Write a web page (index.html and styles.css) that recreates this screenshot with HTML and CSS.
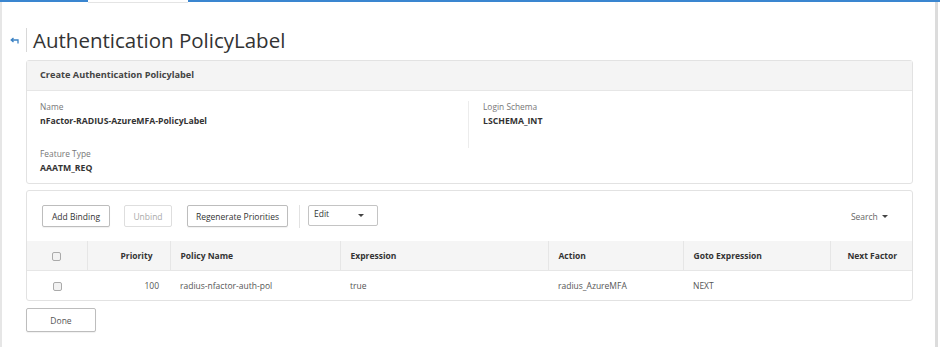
FILE: index.html
```html
<!DOCTYPE html>
<html lang="en">
<head>
    <meta charset="UTF-8">
    <title>Authentication PolicyLabel</title>
    <link rel="stylesheet" href="styles.css">
</head>
<body>
    <div class="topbar">
        <div class="topbar-line"></div>
        <div class="topbar-tab"></div>
        <div class="topbar-line grow"></div>
    </div>
    <div class="page">
        <div class="content">
            <div class="title-row">
                <span class="back">
                    <svg width="9" height="7" viewBox="0 0 9 7"><path d="M8 6.5V3H1.5M3.5 1L1.2 3 3.5 5" fill="none" stroke="#3b82c4" stroke-width="1.3"/></svg>
                </span>
                <h1>Authentication PolicyLabel</h1>
            </div>

            <div class="panel">
                <div class="panel-head">Create Authentication Policylabel</div>
                <div class="panel-body">
                    <div class="field-col">
                        <div class="field">
                            <div class="field-label">Name</div>
                            <div class="field-value">nFactor-RADIUS-AzureMFA-PolicyLabel</div>
                        </div>
                        <div class="field last">
                            <div class="field-label">Feature Type</div>
                            <div class="field-value">AAATM_REQ</div>
                        </div>
                    </div>
                    <div class="field-col right">
                        <div class="field">
                            <div class="field-label">Login Schema</div>
                            <div class="field-value">LSCHEMA_INT</div>
                        </div>
                    </div>
                </div>
            </div>

            <div class="panel bindings">
                <div class="toolbar">
                    <button class="btn btn-add">Add Binding</button>
                    <button class="btn btn-unbind disabled">Unbind</button>
                    <button class="btn btn-regen">Regenerate Priorities</button>
                    <span class="sep"></span>
                    <div class="select">Edit <span class="caret"></span></div>
                    <div class="search">Search <span class="caret small"></span></div>
                </div>
                <table>
                    <thead>
                        <tr>
                            <th class="c-check"><span class="checkbox"></span></th>
                            <th class="c-prio">Priority</th>
                            <th class="c-name">Policy Name</th>
                            <th class="c-expr">Expression</th>
                            <th class="c-action">Action</th>
                            <th class="c-goto">Goto Expression</th>
                            <th class="c-next">Next Factor</th>
                        </tr>
                    </thead>
                    <tbody>
                        <tr>
                            <td class="c-check"><span class="checkbox"></span></td>
                            <td class="c-prio">100</td>
                            <td>radius-nfactor-auth-pol</td>
                            <td>true</td>
                            <td>radius_AzureMFA</td>
                            <td>NEXT</td>
                            <td></td>
                        </tr>
                    </tbody>
                </table>
            </div>

            <button class="btn done">Done</button>
        </div>
        <div class="scrollbar"></div>
    </div>
</body>
</html>
```

FILE: styles.css
```css
body {
    margin: 0;
    font-family: "Open Sans", "DejaVu Sans", sans-serif;
    color: #333;
    background: white;
    height: 347px;
    overflow: hidden;
}
.topbar {
    display: flex;
    height: 2px;
}
.topbar-line {
    width: 88px;
    background: #3a86d0;
}
.topbar-line.grow {
    flex: 1;
    width: auto;
}
.topbar-tab {
    width: 100px;
    border-bottom: 1px solid #e4e4e4;
    margin-bottom: -1px;
}
.page {
    display: flex;
    height: 345px;
    border-left: 2px solid #e6e6e6;
}
.content {
    flex: 1;
    min-width: 0;
    padding: 0 22px 0 24px;
}
.scrollbar {
    width: 3px;
    margin-right: 2px;
    background: #dcdcdc;
}
.title-row {
    display: flex;
    align-items: center;
    height: 24px;
    margin-top: 26px;
}
.back {
    width: 16px;
    margin-left: -16px;
    display: flex;
}
.title-row h1 {
    margin: 0;
    padding-left: 6px;
    border-left: 1px solid #d8d8d8;
    font-size: 20.5px;
    font-weight: normal;
    line-height: 24px;
    color: #333;
}
.panel {
    border: 1px solid #e2e2e2;
    border-radius: 3px;
    margin-top: 8px;
    background: white;
}
.panel-head {
    background: #f4f4f4;
    border-bottom: 1px solid #e6e6e6;
    height: 29px;
    line-height: 27px;
    padding-left: 13px;
    font-size: 9.2px;
    font-weight: bold;
    color: #444;
}
.panel-body {
    display: flex;
    padding: 10px 0 8px;
}
.field-col {
    width: 428px;
    padding-left: 13px;
}
.field-col.right {
    flex: 1;
    border-left: 1px solid #ececec;
    padding-left: 14px;
    align-self: flex-start;
    height: 47px;
}
.field {
    height: 47px;
}
.field.last {
    height: auto;
}
.field-label {
    font-size: 8.4px;
    color: #777;
    line-height: 12px;
}
.field-value {
    font-size: 8.7px;
    font-weight: bold;
    color: #333;
    margin-top: 2px;
    line-height: 13px;
}
.bindings {
    margin-top: 6px;
}
.toolbar {
    display: flex;
    align-items: center;
    height: 50px;
    padding: 0 15px;
}
.btn {
    font-family: "Open Sans", "DejaVu Sans", sans-serif;
    font-size: 8.5px;
    color: #333;
    background: white;
    border: 1px solid #bdbdbd;
    border-radius: 2px;
    height: 22px;
    padding: 0;
    margin-right: 14px;
    box-shadow: 0 1px 1px rgba(0,0,0,0.06);
}
.btn-add {
    width: 68px;
}
.btn-unbind {
    width: 48px;
}
.btn-regen {
    width: 101px;
    margin-right: 11px;
}
.btn.disabled {
    color: #aaa;
    border-color: #dedede;
    box-shadow: none;
    margin-right: 15px;
}
.sep {
    width: 1px;
    height: 23px;
    background: #e2e2e2;
    margin: 0 8px 0 0;
}
.select {
    width: 70px;
    box-sizing: border-box;
    height: 21px;
    border: 1px solid #c4c4c4;
    border-radius: 2px;
    font-size: 8.5px;
    padding: 0 5px 4px;
    display: flex;
    align-items: center;
    justify-content: space-between;
    margin-top: -2px;
}
.caret {
    width: 0;
    height: 0;
    border-left: 3px solid transparent;
    border-right: 3px solid transparent;
    border-top: 3px solid #444;
    margin: 4px 8px 0 0;
}
.caret.small {
    display: inline-block;
    margin: 0 0 1px 2px;
    vertical-align: middle;
}
.search {
    margin-left: auto;
    font-size: 8.5px;
    color: #666;
    margin-right: 9px;
}
table {
    width: 100%;
    table-layout: fixed;
    border-collapse: collapse;
    font-size: 8.5px;
}
th, td {
    box-sizing: border-box;
}
th {
    background: #f5f5f5;
    height: 29px;
    font-weight: bold;
    text-align: left;
    color: #333;
    padding: 0 10px;
    border-left: 1px solid #e6e6e6;
    border-bottom: 1px solid #e6e6e6;
}
th:first-child {
    border-left: none;
}
td {
    height: 30px;
    padding: 0 10px;
    color: #555;
}
.c-check {
    width: 60px;
    text-align: center;
}
.c-prio {
    width: 83px;
    text-align: right;
}
th.c-prio {
    padding-right: 17px;
}
td.c-prio {
    padding-right: 11px;
}
.c-name {
    width: 170px;
}
.c-expr {
    width: 208px;
}
.c-action {
    width: 135px;
}
.c-goto {
    width: 147px;
}
.c-next {
    text-align: center;
    padding: 0 10px 0 12px;
}
.checkbox {
    display: inline-block;
    width: 7px;
    height: 7px;
    border: 1px solid #aaa;
    border-radius: 2px;
    background: #f2f2f2;
    vertical-align: middle;
}
.done {
    margin-top: 7px;
    width: 70px;
    height: 24px;
    color: #555;
}
```
